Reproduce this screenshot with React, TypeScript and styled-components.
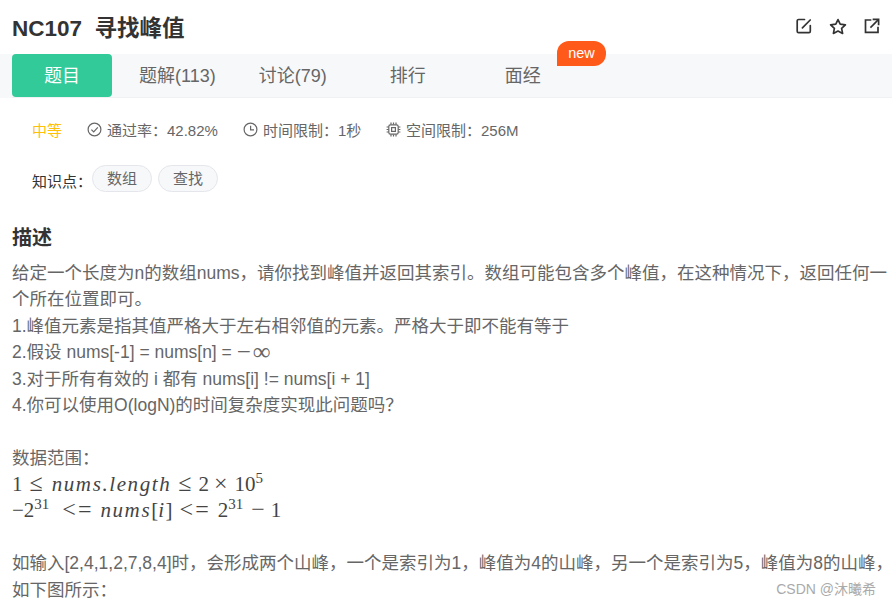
import React from 'react';
import styled, { createGlobalStyle } from 'styled-components';

const CJK = `"Liberation Sans", "Noto Sans CJK SC", sans-serif`;
const TEXT = '#333333';
const GRAY = '#666666';

const GlobalStyle = createGlobalStyle`
  html, body {
    margin: 0;
    padding: 0;
    background: #fff;
    font-family: ${CJK};
  }
`;

const EditIcon = () => (
  <svg width="16" height="16" viewBox="0 0 16 16" fill="none" stroke="#333" strokeWidth="1.7" strokeLinecap="round">
    <path d="M8.5 1.5H2.6C1.9 1.5 1.2 2.1 1.2 2.9V13.2C1.2 14 1.9 14.6 2.6 14.6H13C13.7 14.6 14.3 14 14.3 13.2V7.5" />
    <path d="M6.4 9.8L14.2 2" />
  </svg>
);

const StarIcon = () => (
  <svg width="18" height="17" viewBox="0 0 18 17" fill="none" stroke="#333" strokeWidth="1.7" strokeLinejoin="round">
    <path d="M9 1.6L11.2 6.2L16.4 6.9L12.6 10.4L13.6 15.4L9 13L4.4 15.4L5.4 10.4L1.6 6.9L6.8 6.2Z" />
  </svg>
);

const ShareIcon = () => (
  <svg width="16" height="16" viewBox="0 0 16 16" fill="none" stroke="#333" strokeWidth="1.7" strokeLinecap="square">
    <path d="M6.5 2H1.5V14.4H14V9.5" />
    <path d="M7 9L14 2" />
    <path d="M9.5 1.4H14.6V6.5" />
  </svg>
);

const CheckIcon = () => (
  <svg width="15" height="15" viewBox="0 0 15 15" fill="none" stroke="#666" strokeWidth="1.2">
    <circle cx="7.5" cy="7.5" r="6.4" />
    <path d="M4.4 7.6L6.7 9.9L10.8 5.4" />
  </svg>
);

const ClockIcon = () => (
  <svg width="15" height="15" viewBox="0 0 15 15" fill="none" stroke="#666" strokeWidth="1.2">
    <circle cx="7.5" cy="7.5" r="6.4" />
    <path d="M7.6 3.8V7.9H11" />
  </svg>
);

const ChipIcon = () => (
  <svg width="15" height="15" viewBox="0 0 15 15" fill="none" stroke="#666" strokeWidth="1.2">
    <rect x="2.8" y="2.8" width="9.4" height="9.4" rx="1.6" />
    <rect x="5.6" y="5.6" width="3.8" height="3.8" />
    <path d="M5 .6V2.6M7.5 .6V2.6M10 .6V2.6M5 12.4V14.4M7.5 12.4V14.4M10 12.4V14.4M.6 5H2.6M.6 7.5H2.6M.6 10H2.6M12.4 5H14.4M12.4 7.5H14.4M12.4 10H14.4" />
  </svg>
);

const tabs = [
  { label: '题解(113)', gap: 27 },
  { label: '讨论(79)', gap: 43 },
  { label: '排行', gap: 63 },
  { label: '面经', gap: 79 },
];

const App = () => (
  <Page>
    <GlobalStyle />
    <Header>
      <Title>NC107&nbsp;&nbsp;寻找峰值</Title>
      <Actions>
        <EditIcon />
        <StarIcon />
        <ShareIcon />
      </Actions>
    </Header>
    <TabBar>
      <ActiveTab>题目</ActiveTab>
      {tabs.map((tab) => (
        <Tab key={tab.label} $gap={tab.gap}>
          {tab.label}
        </Tab>
      ))}
      <NewBadge>new</NewBadge>
    </TabBar>
    <MetaRow>
      <Level>中等</Level>
      <MetaItem $width={156}>
        <CheckIcon />
        通过率：42.82%
      </MetaItem>
      <MetaItem $width={143}>
        <ClockIcon />
        时间限制：1秒
      </MetaItem>
      <MetaItem>
        <ChipIcon />
        空间限制：256M
      </MetaItem>
    </MetaRow>
    <TagRow>
      <TagLabel>知识点：</TagLabel>
      <Tag>数组</Tag>
      <Tag>查找</Tag>
    </TagRow>
    <SectionTitle>描述</SectionTitle>
    <Content>
      <Line>给定一个长度为n的数组nums，请你找到峰值并返回其索引。数组可能包含多个峰值，在这种情况下，返回任何一个所在位置即可。</Line>
      <Line>1.峰值元素是指其值严格大于左右相邻值的元素。严格大于即不能有等于</Line>
      <Line>
        2.假设 nums[-1] = nums[n] = <MathInline>−∞</MathInline>
      </Line>
      <Line>3.对于所有有效的 i 都有 nums[i] != nums[i + 1]</Line>
      <Line>4.你可以使用O(logN)的时间复杂度实现此问题吗？</Line>
      <Line>&nbsp;</Line>
      <Line>数据范围：</Line>
      <MathLine>
        1<MathOp $left={7} $right={7}>≤</MathOp>
        <MathVar>nums.length</MathVar>
        <MathOp $left={7} $right={5}>≤</MathOp>2<MathOp $left={5} $right={5}>×</MathOp>10<sup>5</sup>
      </MathLine>
      <MathLine>
        −2<sup>31</sup>
        <MathOp $left={13} $right={7}>&lt;=</MathOp>
        <MathVar>nums</MathVar>[<MathVar>i</MathVar>]<MathOp $left={7} $right={7}>&lt;=</MathOp>2<sup>31</sup>
        <MathOp $left={8} $right={4}>−</MathOp>1
      </MathLine>
      <Line>&nbsp;</Line>
      <Line>如输入[2,4,1,2,7,8,4]时，会形成两个山峰，一个是索引为1，峰值为4的山峰，另一个是索引为5，峰值为8的山峰，</Line>
      <Line>如下图所示：</Line>
    </Content>
    <Watermark>CSDN @沐曦希</Watermark>
  </Page>
);

export default App;

const Page = styled.div`
  position: relative;
  width: 892px;
  height: 606px;
  overflow: hidden;
  background: #fff;
`;

const Header = styled.div`
  display: flex;
  justify-content: space-between;
  align-items: center;
  height: 54px;
  padding: 0 12px;
  box-sizing: border-box;
`;

const Title = styled.h1`
  margin: 0 0 3px;
  font-size: 22.5px;
  font-weight: bold;
  color: ${TEXT};
`;

const Actions = styled.div`
  display: flex;
  align-items: center;
  gap: 17px;
  margin-bottom: 2px;
`;

const TabBar = styled.div`
  position: relative;
  display: flex;
  align-items: center;
  height: 44px;
  margin-left: 12px;
  background: #f7f8fa;
  border-bottom: 1px solid #f0f1f3;
  box-sizing: border-box;
  box-shadow: -12px 0 0 #f7f8fa;
`;

const ActiveTab = styled.div`
  display: flex;
  justify-content: center;
  align-items: center;
  width: 100px;
  height: 43px;
  padding-bottom: 3px;
  box-sizing: border-box;
  border-radius: 4px;
  background: #32ca99;
  color: #fff;
  font-size: 18px;
`;

const Tab = styled.div<{ $gap: number }>`
  margin-left: ${(p) => p.$gap}px;
  padding-bottom: 3px;
  color: ${GRAY};
  font-size: 18px;
`;

const NewBadge = styled.div`
  position: absolute;
  left: 545px;
  top: -13px;
  width: 49px;
  height: 25px;
  border-radius: 12px 12px 12px 0;
  background: #ff5a1a;
  color: #fff;
  font-size: 14.5px;
  line-height: 25px;
  text-align: center;
`;

const MetaRow = styled.div`
  display: flex;
  align-items: center;
  height: 20px;
  margin-top: 21px;
  padding-left: 32px;
  color: ${GRAY};
  font-size: 15px;
`;

const Level = styled.span`
  width: 55px;
  color: #ffc107;
`;

const MetaItem = styled.span<{ $width?: number }>`
  display: flex;
  align-items: center;
  gap: 5px;
  width: ${(p) => (p.$width ? `${p.$width}px` : 'auto')};
`;

const TagRow = styled.div`
  display: flex;
  align-items: center;
  height: 27px;
  margin-top: 26px;
  padding-left: 32px;
`;

const TagLabel = styled.span`
  width: 60px;
  padding-top: 3px;
  color: ${TEXT};
  font-size: 15px;
`;

const Tag = styled.span`
  display: flex;
  justify-content: center;
  align-items: center;
  box-sizing: border-box;
  width: 60px;
  height: 27px;
  margin-right: 6px;
  padding-bottom: 2px;
  border: 1px solid #e4e6eb;
  border-radius: 14px;
  background: #f7f8fa;
  color: ${GRAY};
  font-size: 15px;
`;

const SectionTitle = styled.h2`
  margin: 31px 0 0;
  padding: 0 12px;
  color: ${TEXT};
  font-size: 20px;
  font-weight: bold;
  line-height: 30px;
`;

const Content = styled.div`
  margin: 7px -4px 0 0;
  padding-left: 12px;
  color: ${GRAY};
  font-size: 17.5px;
  line-height: 26.4px;
`;

const Line = styled.div`
  width: fit-content;
`;

const MathInline = styled.span`
  font-family: "Liberation Serif", serif;
  font-size: 25px;
  line-height: 0;
  letter-spacing: 2px;
  vertical-align: -2px;
  color: ${GRAY};
`;

const MathLine = styled.div`
  margin-top: -0.5px;
  margin-bottom: 0.5px;
  font-family: "Liberation Serif", serif;
  font-size: 21px;
  color: #444;

  sup {
    font-size: 15px;
    line-height: 0;
  }
`;

const MathVar = styled.i`
  letter-spacing: 1.6px;
`;

const MathOp = styled.span<{ $left: number; $right: number }>`
  margin: 0 ${(p) => p.$right}px 0 ${(p) => p.$left}px;
  font-size: 24px;
  line-height: 0;
  letter-spacing: 2px;
`;

const Watermark = styled.div`
  position: absolute;
  right: 16px;
  bottom: 8px;
  color: #aaaaaa;
  font-size: 14px;
`;
